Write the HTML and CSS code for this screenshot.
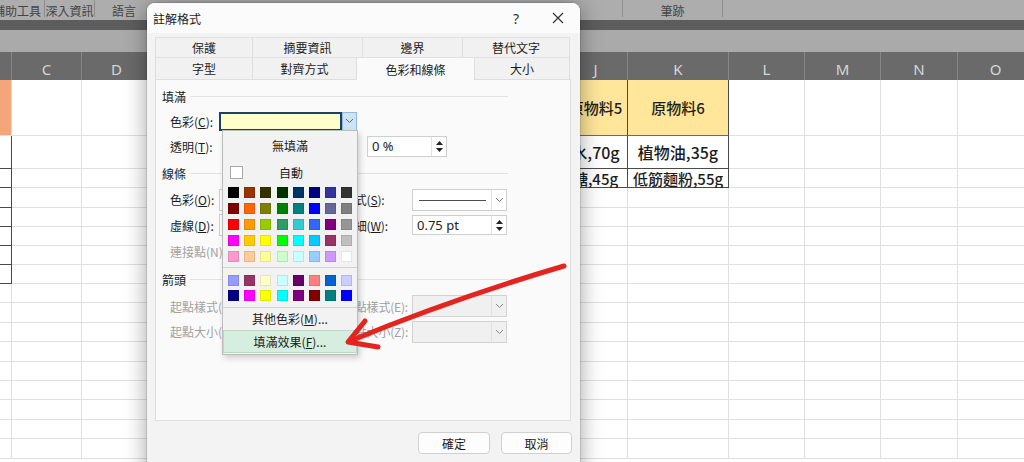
FILE: index.html
```html
<!DOCTYPE html>
<html lang="zh-Hant">
<head>
<meta charset="utf-8">
<title>註解格式</title>
<link rel="stylesheet" href="styles.css">
</head>
<body>
<div class="excel">
  <div class="ribbon">
    <div class="rtab first">輔助工具</div>
    <div class="rtab w50">深入資訊</div>
    <div class="rtab w58">語言</div>
    <div class="rspacer"></div>
    <div class="rtab w100">筆跡</div>
  </div>
  <div class="darkband"></div>
  <div class="formulabar"></div>
  <div class="sheet">
    <div class="ch"></div><div class="ch">C</div><div class="ch">D</div><div class="ch"></div><div class="ch">J</div><div class="ch">K</div><div class="ch">L</div><div class="ch">M</div><div class="ch">N</div><div class="ch">O</div>

    <div class="or"></div><div></div><div></div><div class="gl"></div><div class="yl txt">原物料5</div><div class="yl txt">原物料6</div><div></div><div></div><div></div><div></div>
    <div class="bx"></div><div></div><div></div><div class="gl"></div><div class="bk txt big">水,70g</div><div class="bk txt big">植物油,35g</div><div></div><div></div><div></div><div></div>
    <div class="bx"></div><div></div><div></div><div class="gl"></div><div class="bk txt">糖,45g</div><div class="bk txt">低筋麵粉,55g</div><div></div><div></div><div></div><div></div>
    <div class="bx"></div><div></div><div></div><div></div><div></div><div></div><div></div><div></div><div></div><div></div>
    <div class="bx"></div><div></div><div></div><div></div><div></div><div></div><div></div><div></div><div></div><div></div>
    <div class="bx"></div><div></div><div></div><div></div><div></div><div></div><div></div><div></div><div></div><div></div>
    <div class="bx"></div><div></div><div></div><div></div><div></div><div></div><div></div><div></div><div></div><div></div>
    <div class="bx"></div><div></div><div></div><div></div><div></div><div></div><div></div><div></div><div></div><div></div>
    <div></div><div></div><div></div><div></div><div></div><div></div><div></div><div></div><div></div><div></div>
    <div></div><div></div><div></div><div></div><div></div><div></div><div></div><div></div><div></div><div></div>
    <div></div><div></div><div></div><div></div><div></div><div></div><div></div><div></div><div></div><div></div>
    <div></div><div></div><div></div><div></div><div></div><div></div><div></div><div></div><div></div><div></div>
    <div></div><div></div><div></div><div></div><div></div><div></div><div></div><div></div><div></div><div></div>
    <div></div><div></div><div></div><div></div><div></div><div></div><div></div><div></div><div></div><div></div>
    <div></div><div></div><div></div><div></div><div></div><div></div><div></div><div></div><div></div><div></div>
    <div></div><div></div><div></div><div></div><div></div><div></div><div></div><div></div><div></div><div></div>
    <div></div><div></div><div></div><div></div><div></div><div></div><div></div><div></div><div></div><div></div>
  </div>
</div>

<div class="dialog">
  <div class="titlebar">
    <span class="title">註解格式</span>
    <span class="tb-btn help">?</span>
    <span class="tb-btn close"><svg width="12" height="12" viewBox="0 0 12 12"><path d="M1 1L11 11M11 1L1 11" stroke="#333" stroke-width="1.2" fill="none"/></svg></span>
  </div>
  <div class="tabs">
    <div class="tabrow back">
      <div class="tab w98">保護</div><div class="tab w110">摘要資訊</div><div class="tab w100t">邊界</div><div class="tab w107">替代文字</div>
    </div>
    <div class="tabrow front">
      <div class="tab w98">字型</div><div class="tab w104">對齊方式</div><div class="tab w118 active">色彩和線條</div><div class="tab w95">大小</div>
    </div>
  </div>
  <div class="panel">
    <div class="section h24"><span>填滿</span></div>
    <div class="row h26">
      <span class="lbl">色彩(<u>C</u>):</span>
      <div class="colorcombo"><div class="swatchbox"></div><div class="ddbtn"><svg width="9" height="6" viewBox="0 0 9 6"><path d="M1 1L4.5 4.5L8 1" stroke="#666" fill="none"/></svg></div></div>
    </div>
    <div class="row h25">
      <span class="lbl">透明(<u>T</u>):</span>
      <div class="slider"></div>
      <div class="spin w80"><span class="spin-val">0 %</span><span class="spin-btns"><svg width="7" height="4" viewBox="0 0 7 4"><path d="M0 4L3.5 0L7 4Z" fill="#222"/></svg><svg width="7" height="4" viewBox="0 0 7 4"><path d="M0 0L3.5 4L7 0Z" fill="#222"/></svg></span></div>
    </div>
    <div class="section h28"><span>線條</span></div>
    <div class="row h25">
      <span class="lbl">色彩(<u>O</u>):</span>
      <div class="combo w108"></div>
      <span class="rlbl">樣式(<u>S</u>):</span>
      <div class="combo w95"><span class="lineprev"></span><span class="chev"><svg width="9" height="6" viewBox="0 0 9 6"><path d="M1 1L4.5 4.5L8 1" stroke="#777" fill="none"/></svg></span></div>
    </div>
    <div class="row h26">
      <span class="lbl">虛線(<u>D</u>):</span>
      <div class="combo w108"></div>
      <span class="rlbl">粗細(<u>W</u>):</span>
      <div class="spin w95"><span class="spin-val">0.75 pt</span><span class="spin-btns"><svg width="7" height="4" viewBox="0 0 7 4"><path d="M0 4L3.5 0L7 4Z" fill="#222"/></svg><svg width="7" height="4" viewBox="0 0 7 4"><path d="M0 0L3.5 4L7 0Z" fill="#222"/></svg></span></div>
    </div>
    <div class="row h26 dis">
      <span class="lbl wide">連接點(N):</span>
    </div>
    <div class="section h30"><span>箭頭</span></div>
    <div class="row h24 dis">
      <span class="lbl wide">起點樣式(B):</span>
      <div class="combo off w80"></div>
      <span class="rlbl">終點樣式(E):</span>
      <div class="combo off w95"><span class="fill"></span><span class="chev"><svg width="9" height="6" viewBox="0 0 9 6"><path d="M1 1L4.5 4.5L8 1" stroke="#888" fill="none"/></svg></span></div>
    </div>
    <div class="row h27 dis">
      <span class="lbl wide">起點大小(I):</span>
      <div class="combo off w80"></div>
      <span class="rlbl">終點大小(Z):</span>
      <div class="combo off w95"><span class="fill"></span><span class="chev"><svg width="9" height="6" viewBox="0 0 9 6"><path d="M1 1L4.5 4.5L8 1" stroke="#888" fill="none"/></svg></span></div>
    </div>
  </div>
  <div class="footer">
    <button class="btn ok">確定</button>
    <button class="btn cancel">取消</button>
  </div>

  <div class="dropdown">
    <div class="dd-none">無填滿</div>
    <div class="dd-auto"><span class="auto-swatch"></span><span class="auto-txt">自動</span></div>
    <div class="swatches">
      <i style="background:#000000"></i><i style="background:#993300"></i><i style="background:#333300"></i><i style="background:#003300"></i><i style="background:#003366"></i><i style="background:#000080"></i><i style="background:#333399"></i><i style="background:#333333"></i>
      <i style="background:#800000"></i><i style="background:#ff6600"></i><i style="background:#808000"></i><i style="background:#008000"></i><i style="background:#008080"></i><i style="background:#0000ff"></i><i style="background:#666699"></i><i style="background:#808080"></i>
      <i style="background:#ff0000"></i><i style="background:#ff9900"></i><i style="background:#99cc00"></i><i style="background:#339966"></i><i style="background:#33cccc"></i><i style="background:#3366ff"></i><i style="background:#800080"></i><i style="background:#969696"></i>
      <i style="background:#ff00ff"></i><i style="background:#ffcc00"></i><i style="background:#ffff00"></i><i style="background:#00ff00"></i><i style="background:#00ffff"></i><i style="background:#00ccff"></i><i style="background:#993366"></i><i style="background:#c0c0c0"></i>
      <i style="background:#ff99cc"></i><i style="background:#ffcc99"></i><i style="background:#ffff99"></i><i style="background:#ccffcc"></i><i style="background:#ccffff"></i><i style="background:#99ccff"></i><i style="background:#cc99ff"></i><i style="background:#ffffff"></i>
    </div>
    <div class="dd-sep"></div>
    <div class="swatches two">
      <i style="background:#9999ff"></i><i style="background:#993366"></i><i style="background:#ffffcc"></i><i style="background:#ccffff"></i><i style="background:#660066"></i><i style="background:#ff8080"></i><i style="background:#0066cc"></i><i style="background:#ccccff"></i>
      <i style="background:#000080"></i><i style="background:#ff00ff"></i><i style="background:#ffff00"></i><i style="background:#00ffff"></i><i style="background:#800080"></i><i style="background:#800000"></i><i style="background:#008080"></i><i style="background:#0000ff"></i>
    </div>
    <div class="dd-sep sep2"></div>
    <div class="dd-more">其他色彩(<u>M</u>)...</div>
    <div class="dd-effect">填滿效果(<u>F</u>)...</div>
  </div>
</div>

<svg class="annot" width="1024" height="462" viewBox="0 0 1024 462">
  <path d="M564 266 Q 455 298 350 341" stroke="#e3241f" stroke-width="5" fill="none" stroke-linecap="round"/>
  <path d="M365 321 L348 342 L378 347" stroke="#e3241f" stroke-width="5" fill="none" stroke-linecap="round" stroke-linejoin="round"/>
</svg>
</body>
</html>
```

FILE: styles.css
```css
* { box-sizing: border-box; }
html, body { margin: 0; padding: 0; }
body {
  width: 1024px;
  height: 462px;
  overflow: hidden;
  position: relative;
  background: #ffffff;
  font-family: "Noto Sans CJK TC", "Noto Sans", sans-serif;
}

/* ---------- Excel background ---------- */
.excel { width: 1024px; height: 462px; overflow: hidden; }

.ribbon {
  height: 20px;
  background: #adadad;
  display: flex;
  font-size: 12px;
  color: #444444;
}
.rtab {
  flex: none;
  height: 17px;
  padding-top: 4px;
  line-height: 14px;
  text-align: center;
  white-space: nowrap;
  border-right: 1px solid #8d8d8d;
}
.rtab.first { margin-left: -10px; width: 55px; }
.rtab.w50 { width: 50px; }
.rtab.w58 { width: 58px; border-right: 0; }
.rtab.w100 { width: 100px; }
.rspacer { flex: none; width: 470px; height: 17px; border-right: 1px solid #8d8d8d; }

.darkband { height: 10px; background: #5d5d5d; }
.formulabar { height: 22px; background: #aaaaaa; }

.sheet {
  display: grid;
  grid-template-columns: 12px 70px 70px 412px 64px 101px 76px 76px 77px 76px;
  grid-template-rows: 28px 56px 33px 19px 20px 19px 19px 19px 19px repeat(10, 19.4px);
  width: 1034px;
}
.sheet > div {
  background: #ffffff;
  border-right: 1px solid #e0e0e0;
  border-bottom: 1px solid #e0e0e0;
}
.sheet > .ch {
  background: #6a6a6a;
  border-right: 1px solid #868686;
  border-bottom: 0;
  color: #d6d6d6;
  font-family: "Noto Sans", sans-serif;
  font-size: 15px;
  display: flex;
  justify-content: center;
  align-items: center;
  padding-top: 5px;
}
.sheet > .or { background: #f4a67a; }
.sheet > .bx { border-right-color: #4a4a4a; border-bottom-color: #4a4a4a; }
.sheet > .gl { border-right-color: #4a4a4a; }
.sheet > .yl { background: #ffe69a; border-right-color: #4a4a4a; border-bottom-color: #7a6a48; }
.sheet > .bk { border-right-color: #4a4a4a; border-bottom-color: #4a4a4a; }
.txt {
  display: flex;
  align-items: center;
  justify-content: center;
  white-space: nowrap;
  font-size: 15px;
  font-weight: 500;
  color: #1c1c1c;
}
.txt.big { font-size: 16px; }

/* ---------- Dialog ---------- */
.dialog {
  position: absolute;
  left: 147px;
  top: 3px;
  width: 433px;
  height: 472px;
  background: #f3f3f3;
  border-radius: 8px 8px 0 0;
  box-shadow: 0 0 0 1px rgba(0,0,0,0.10), 0 2px 22px rgba(0,0,0,0.38);
  font-size: 12px;
  color: #1b1b1b;
}
.titlebar {
  height: 30px;
  background: #fbfbfb;
  border-radius: 8px 8px 0 0;
  display: flex;
  align-items: center;
  padding-left: 6px;
}
.title { flex: 1; }
.tb-btn {
  width: 44px;
  height: 30px;
  display: flex;
  align-items: center;
  justify-content: center;
}
.help { font-family: "Noto Sans", sans-serif; font-size: 14px; color: #333; width: 40px; }

.tabs { padding: 4px 0 0 8px; }
.tabrow { display: flex; }
.tab {
  flex: none;
  display: flex;
  align-items: center;
  justify-content: center;
  background: #f1f1f1;
  border-top: 1px solid #e1e1e1;
  border-right: 1px solid #dedede;
}
.tabrow .tab:first-child { border-left: 1px solid #dedede; }
.back .tab { height: 20px; }
.front .tab { height: 22px; }
.w98 { width: 98px; }
.w110 { width: 110px; }
.w100t { width: 100px; }
.w107 { width: 107px; }
.w104 { width: 104px; }
.w118 { width: 118px; }
.w95 { width: 95px; }
.tab.active {
  background: #fafafa;
  position: relative;
  z-index: 1;
  height: 23px;
  margin-bottom: -1px;
}

.panel {
  margin-left: 8px;
  width: 416px;
  height: 342px;
  border: 1px solid #dedede;
  background: #fafafa;
  padding-top: 4px;
}
.section {
  display: flex;
  align-items: center;
  gap: 4px;
  padding: 0 62px 0 6px;
}
.section::after {
  content: "";
  flex: 1;
  height: 1px;
  background: #e2e2e2;
}
.h24 { height: 24px; }
.h25 { height: 25px; }
.h26 { height: 26px; }
.h27 { height: 27px; }
.h28 { height: 28px; }
.h30 { height: 30px; }

.row {
  display: flex;
  align-items: center;
  padding-left: 14px;
}
.lbl { flex: none; width: 49px; white-space: nowrap; }
.lbl.wide { width: 77px; }
.rlbl { flex: none; width: 69px; margin-left: 16px; white-space: nowrap; letter-spacing: -0.2px; }
.dis { color: #a2a2a2; }

.colorcombo { display: flex; width: 138px; height: 19px; }
.swatchbox { flex: 1; background: #ffffcc; border: 2px solid #1f3f66; }
.ddbtn {
  width: 15px;
  background: #cde4f7;
  border: 1px solid #8fbbe3;
  display: flex;
  align-items: center;
  justify-content: center;
}

.slider { width: 138px; height: 20px; }
.spin {
  display: flex;
  height: 21px;
  background: #ffffff;
  border: 1px solid #cfcfcf;
  font-size: 13px;
  font-family: "Noto Sans", sans-serif;
  color: #222;
}
.spin.w80 { width: 80px; margin-left: 10px; }
.spin.w95 { width: 95px; height: 20px; }
.spin-val { flex: 1; padding-left: 4px; line-height: 19px; }
.spin-btns {
  width: 15px;
  border-left: 1px solid #e2e2e2;
  display: flex;
  flex-direction: column;
  justify-content: space-around;
  align-items: center;
  padding: 2px 0;
}

.combo {
  display: flex;
  height: 22px;
  background: #ffffff;
  border: 1px solid #cfcfcf;
}
.combo.w108 { width: 108px; }
.combo.w80 { width: 80px; }
.combo.w95 { width: 95px; }
.combo.off { background: #f0f0f0; border-color: #d2d2d2; height: 22px; }
.lineprev { flex: 1; position: relative; }
.lineprev::before {
  content: "";
  position: absolute;
  left: 6px;
  right: 5px;
  top: 10px;
  height: 1px;
  background: #4d4d4d;
}
.fill { flex: 1; }
.chev {
  width: 15px;
  border-left: 1px solid #e2e2e2;
  display: flex;
  align-items: center;
  justify-content: center;
}

.footer {
  display: flex;
  justify-content: flex-end;
  gap: 11px;
  padding: 11px 8px 0 0;
}
.btn {
  height: 22px;
  border: 1px solid #d0d0d0;
  border-radius: 4px;
  background: #fdfdfd;
  font-family: "Noto Sans CJK TC", "Noto Sans", sans-serif;
  font-size: 12px;
  color: #1b1b1b;
  padding: 0;
}
.btn.ok { width: 72px; }
.btn.cancel { width: 71px; }

/* ---------- Color dropdown ---------- */
.dropdown {
  position: absolute;
  left: 75px;
  top: 127px;
  width: 136px;
  background: #f2f2f2;
  border: 1px solid #bdbdbd;
  box-shadow: 2px 3px 6px rgba(0,0,0,0.18);
  z-index: 5;
  padding-bottom: 1px;
}
.dd-none {
  height: 28px;
  display: flex;
  align-items: center;
  justify-content: center;
}
.dd-auto {
  height: 27px;
  display: flex;
  align-items: center;
  padding-left: 7px;
}
.auto-swatch { width: 13px; height: 13px; background: #ffffff; border: 1px solid #a9a9a9; }
.auto-txt { flex: 1; text-align: center; padding-right: 18px; }
.swatches {
  display: grid;
  grid-template-columns: repeat(8, 11px);
  column-gap: 5.2px;
  row-gap: 5px;
  padding-left: 5px;
  margin-top: 1px;
}
.swatches.two { row-gap: 4px; margin-top: 0; }
.swatches i {
  display: block;
  width: 11px;
  height: 11px;
  box-shadow: inset 0 0 0 1px rgba(0,0,0,0.10);
}
.dd-sep { height: 1px; background: #d2d2d2; margin: 5px 0 7px; }
.dd-sep.sep2 { margin: 6px 0 0; }
.dd-more {
  height: 21px;
  display: flex;
  align-items: center;
  justify-content: center;
}
.dd-effect {
  height: 23px;
  margin: 1px 0 0 0;
  background: #d6eee0;
  border: 1px solid #b3dcc3;
  display: flex;
  align-items: center;
  justify-content: center;
}

.annot {
  position: absolute;
  left: 0;
  top: 0;
  pointer-events: none;
  z-index: 10;
}
```
